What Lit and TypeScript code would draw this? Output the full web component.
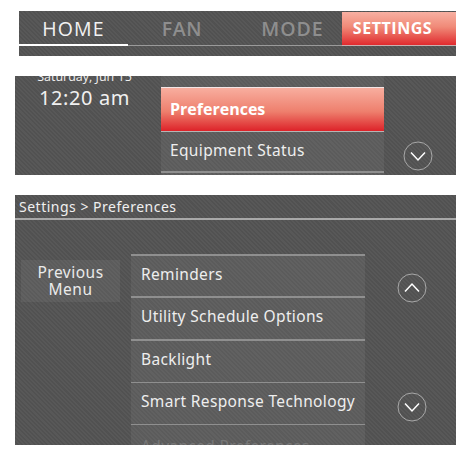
import { LitElement, html, css } from "lit";
import { customElement } from "lit/decorators.js";

const chevron = (up: boolean) => html`<svg class="chev" viewBox="0 0 30 30" width="30" height="30" aria-hidden="true">
  <circle cx="15" cy="15" r="14" fill="none" stroke="#bdbdbd" stroke-width="0.8"></circle>
  <path d="${up ? "M8 18.5 L15 11 L22 18.5" : "M8 11.5 L15 19 L22 11.5"}" fill="none" stroke="#fff" stroke-width="1.5"></path>
</svg>`;

@customElement("app-root")
export class AppRoot extends LitElement {
  static styles = css`
    :host {
      display: block;
      width: 474px;
      height: 451px;
      background: #fff;
      overflow: hidden;
      font-family: "Open Sans", "Noto Sans", sans-serif;
      color: #f0f0f0;
    }
    .page {
      display: flex;
      flex-direction: column;
      padding-top: 11px;
    }
    .tex {
      background-color: #545454;
      background-image: repeating-linear-gradient(
        45deg,
        rgba(255, 255, 255, 0.025) 0 1.5px,
        rgba(0, 0, 0, 0.03) 1.5px 3px
      );
    }
    .nav {
      margin-left: 19px;
      width: 437px;
      height: 45px;
      box-sizing: border-box;
      padding-bottom: 10px;
    }
    .tabs {
      display: grid;
      grid-template-columns: 109px 108px 106px 114px;
      height: 35px;
    }
    .tab {
      display: flex;
      align-items: center;
      justify-content: center;
      font-size: 19.5px;
      letter-spacing: 0.6px;
      padding-top: 1px;
      box-sizing: border-box;
      border-bottom: 1px solid #9a9a9a;
      color: #8e8e8e;
      font-weight: 600;
    }
    .tab.home {
      color: #f2f2f2;
      font-weight: 400;
      border-bottom: 2px solid #fff;
      letter-spacing: 1.2px;
    }
    .tab.mode {
      letter-spacing: 1px;
      padding-left: 7px;
    }
    .tab.settings {
      margin-top: 1px;
      color: #fff;
      font-size: 16px;
      font-weight: 700;
      letter-spacing: 0.55px;
      padding: 0 13px 1px 0;
      border-bottom: 1px solid #c9b0b0;
      background: linear-gradient(#f8b0a2, #f08a78 45%, #e02a2e);
    }
    .status {
      margin: 20px 0 0 15px;
      width: 441px;
      height: 99px;
      display: grid;
      grid-template-columns: 146px 223px 72px;
      overflow: hidden;
    }
    .clock {
      display: flex;
      flex-direction: column;
      align-items: center;
      margin: -7px 7px 0 0;
    }
    .date {
      font-size: 12.5px;
      line-height: 16px;
    }
    .time {
      font-family: "Noto Sans", sans-serif;
      font-size: 20px;
      line-height: 26px;
      letter-spacing: 0.6px;
    }
    .menu {
      background-color: rgba(255, 255, 255, 0.06);
      display: flex;
      flex-direction: column;
    }
    .status .menu {
      padding-top: 11px;
    }
    .item {
      display: flex;
      align-items: center;
      box-sizing: border-box;
      padding-left: 9px;
      font-size: 15.5px;
      letter-spacing: 0.35px;
      color: #eee;
      font-family: "Noto Sans", sans-serif;
    }
    .item.active {
      height: 45px;
      padding-bottom: 2px;
      border-top: 1px solid #f3e6e6;
      border-bottom: 1px solid #b5b5b5;
      color: #fff;
      font-family: "Open Sans", sans-serif;
      font-weight: 700;
      font-size: 16px;
      letter-spacing: 0;
      background: linear-gradient(#f8ae9f, #ee7f6d 55%, #dd2229);
    }
    .item.plain {
      height: 41px;
      padding-bottom: 3px;
      border-bottom: 2px solid #8f8f8f;
    }
    .side {
      display: flex;
      justify-content: center;
      align-items: flex-end;
      padding: 0 5px 4px 0;
    }
    .chev {
      display: block;
    }
    .screen {
      margin: 20px 0 0 15px;
      width: 441px;
      height: 250px;
      overflow: hidden;
      display: flex;
      flex-direction: column;
    }
    .crumb {
      height: 25px;
      box-sizing: border-box;
      border-bottom: 2px solid #a8a8a8;
      padding-left: 4px;
      font-family: "Noto Sans", sans-serif;
      font-size: 14px;
      line-height: 23px;
      letter-spacing: 0.5px;
    }
    .body {
      display: grid;
      grid-template-columns: 6px 99px 11px 234px 1fr;
      padding-top: 34px;
    }
    .prev {
      grid-column: 2;
      margin-top: 6px;
      height: 42px;
      display: flex;
      align-items: center;
      justify-content: center;
      text-align: center;
      font-family: "Noto Sans", sans-serif;
      font-size: 15.5px;
      letter-spacing: 0.5px;
      line-height: 17.5px;
      background: rgba(255, 255, 255, 0.06);
      color: #eaeaea;
    }
    .list {
      grid-column: 4;
      height: 191px;
      border-top: 2px solid #8f8f8f;
    }
    .list .item {
      height: 42.3px;
      flex: none;
      padding: 0 0 5px 10px;
      border-bottom: 2px solid #8f8f8f;
    }
    .list .item.thin {
      border-bottom-width: 1px;
    }
    .list .item.fade {
      border: 0;
      color: #777;
      padding-top: 4px;
    }
    .arrows {
      grid-column: 5;
      display: flex;
      flex-direction: column;
      align-items: center;
      padding: 19px 0 0 2px;
      gap: 89px;
    }
  `;

  render() {
    return html`<div class="page">
      <div class="nav tex">
        <div class="tabs">
          <div class="tab home">HOME</div>
          <div class="tab">FAN</div>
          <div class="tab mode">MODE</div>
          <div class="tab settings">SETTINGS</div>
        </div>
      </div>

      <div class="status tex">
        <div class="clock">
          <div class="date">Saturday, Jun 15</div>
          <div class="time">12:20 am</div>
        </div>
        <div class="menu">
          <div class="item active">Preferences</div>
          <div class="item plain">Equipment Status</div>
        </div>
        <div class="side">${chevron(false)}</div>
      </div>

      <div class="screen tex">
        <div class="crumb">Settings &gt; Preferences</div>
        <div class="body">
          <div class="prev">Previous<br />Menu</div>
          <div class="list menu">
            <div class="item">Reminders</div>
            <div class="item">Utility Schedule Options</div>
            <div class="item thin">Backlight</div>
            <div class="item thin">Smart Response Technology</div>
            <div class="item fade">Advanced Preferences</div>
          </div>
          <div class="arrows">${chevron(true)}${chevron(false)}</div>
        </div>
      </div>
    </div>`;
  }
}
